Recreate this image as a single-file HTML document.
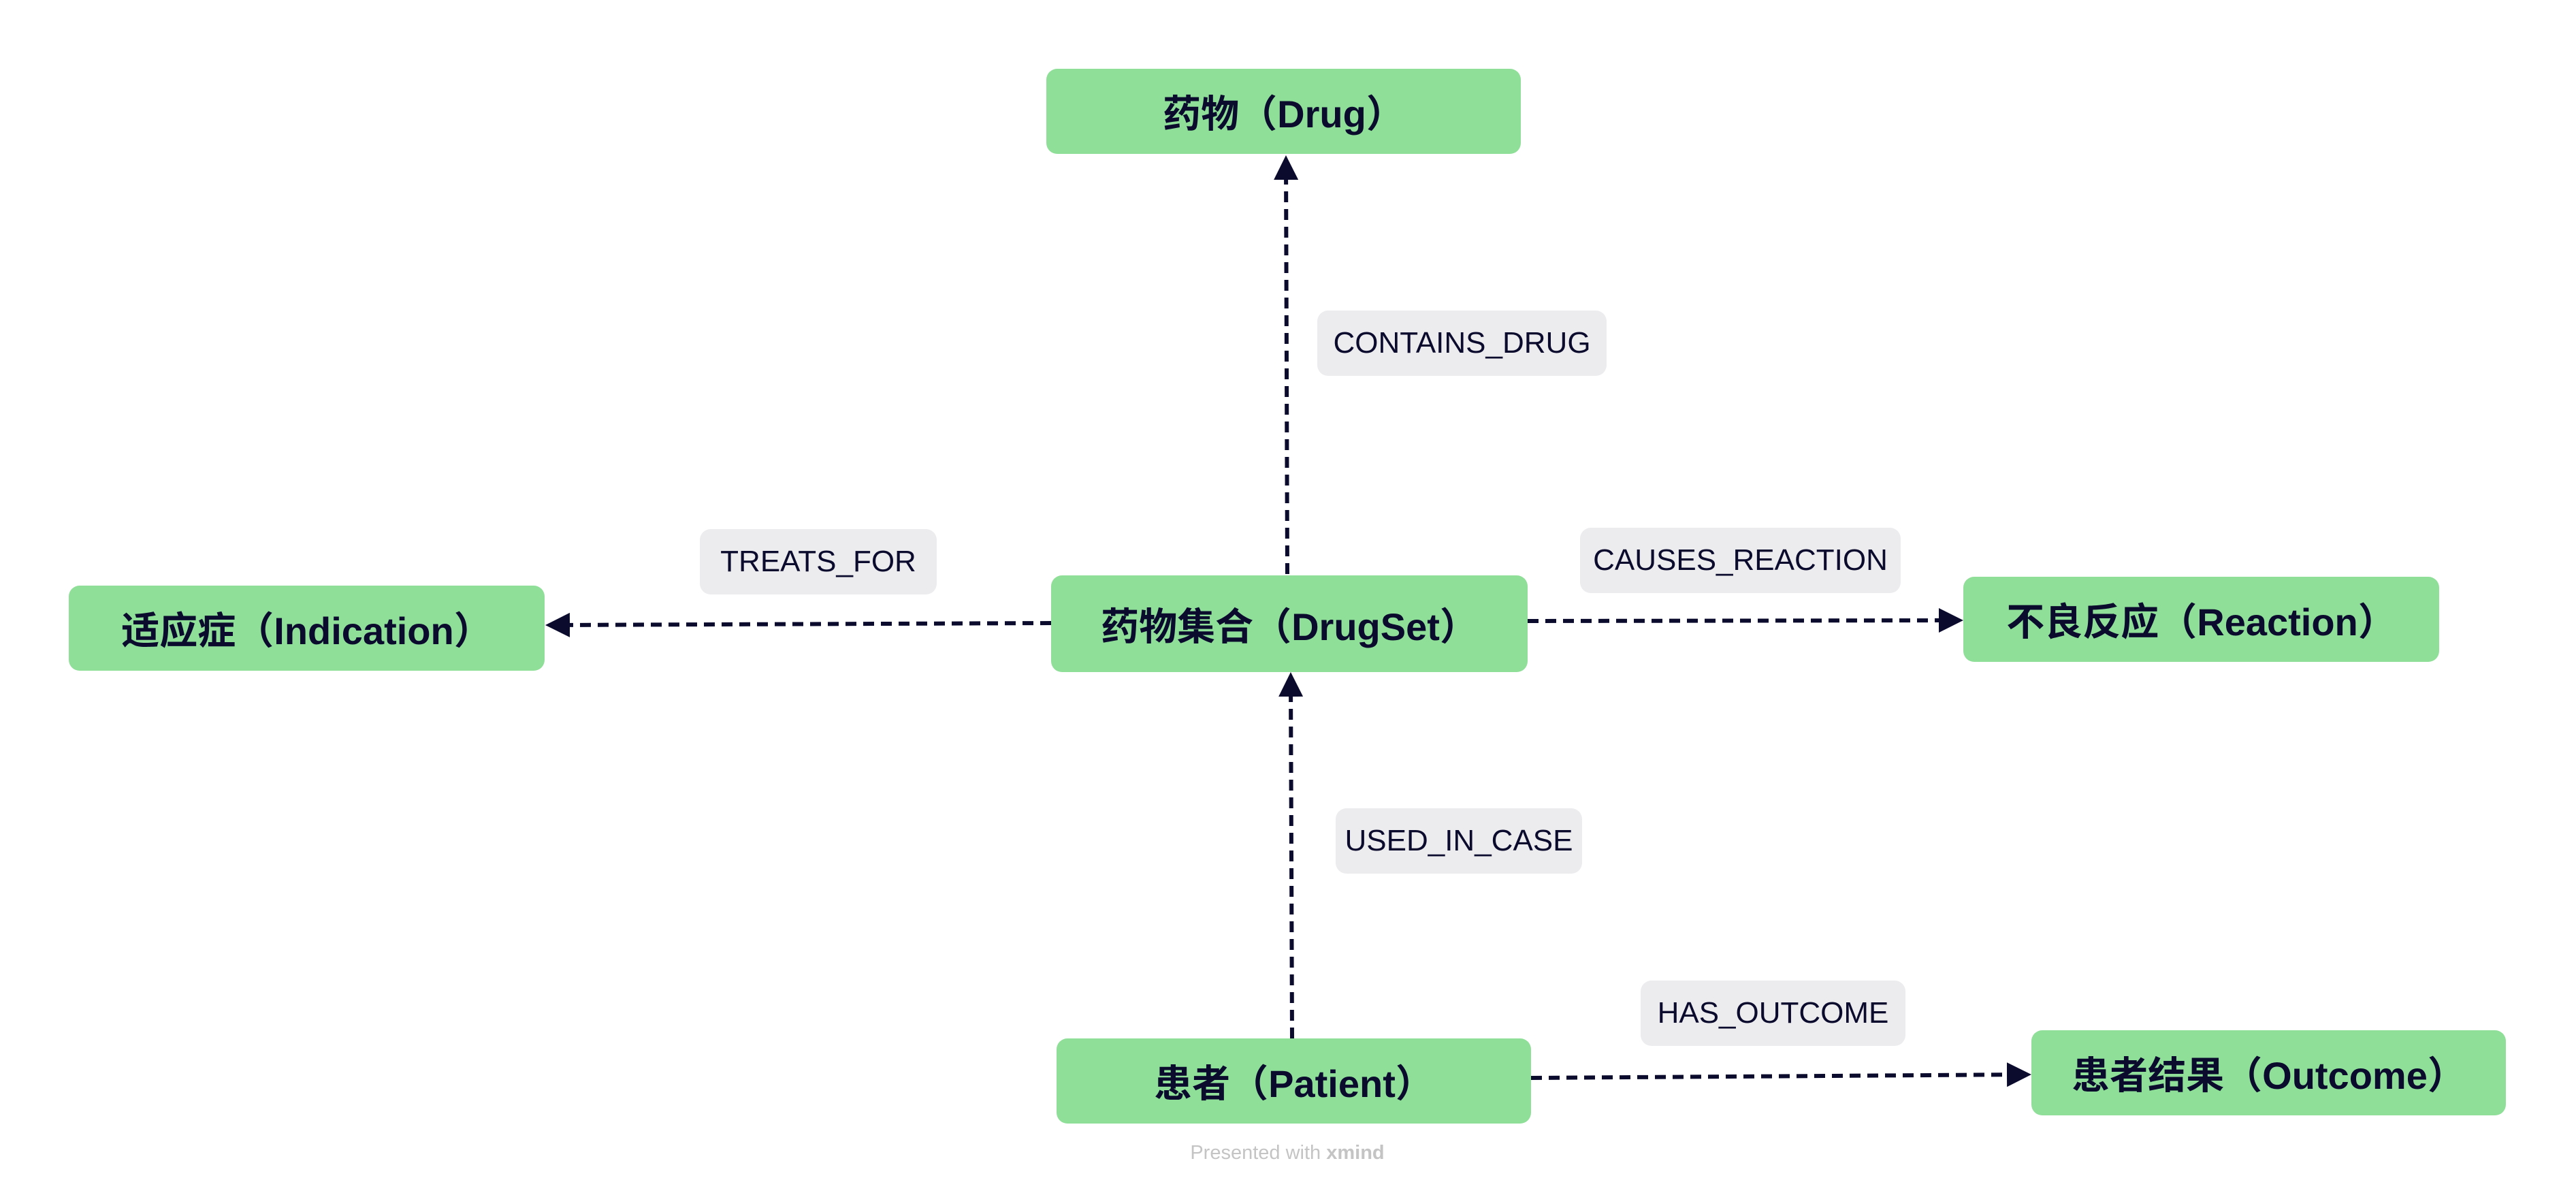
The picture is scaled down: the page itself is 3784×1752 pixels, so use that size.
<!DOCTYPE html>
<html><head><meta charset="utf-8"><style>
html,body{margin:0;padding:0;background:#fff;}
body{width:3784px;height:1752px;position:relative;overflow:hidden;font-family:"Liberation Sans","Noto Sans CJK SC",sans-serif;color:#0b0b2e;}
.n{position:absolute;background:#8fdf99;border-radius:16px;display:flex;align-items:center;justify-content:center;font-size:56px;font-weight:bold;white-space:nowrap;}
.l{position:absolute;background:#ecebee;border-radius:16px;display:flex;align-items:center;justify-content:center;font-size:44px;white-space:nowrap;}
svg{position:absolute;left:0;top:0;}
.f{position:absolute;left:1731px;top:1677px;width:320px;text-align:center;font-size:29px;color:#c4c4c4;}
</style></head><body>
<svg width="3784" height="1752">
<defs><marker id="a" markerWidth="6" markerHeight="6" refX="5" refY="3" orient="auto" markerUnits="strokeWidth"><path d="M0,0 L6,3 L0,6 z" fill="#0b0b2e"/></marker></defs>
<g stroke="#0b0b2e" stroke-width="6" stroke-dasharray="16,10" fill="none">
<line x1="1891" y1="843" x2="1889" y2="234" marker-end="url(#a)"/>
<line x1="1544" y1="915" x2="807" y2="918" marker-end="url(#a)"/>
<line x1="2244" y1="912" x2="2878" y2="911" marker-end="url(#a)"/>
<line x1="1898" y1="1525" x2="1896" y2="993" marker-end="url(#a)"/>
<line x1="2249" y1="1583" x2="2978" y2="1578" marker-end="url(#a)"/>
</g></svg>
<div class="n" style="left:1537px;top:101px;width:697px;height:125px;">药物（Drug）</div>
<div class="n" style="left:101px;top:860px;width:699px;height:125px;">适应症（Indication）</div>
<div class="n" style="left:1544px;top:845px;width:700px;height:142px;">药物集合（DrugSet）</div>
<div class="n" style="left:2884px;top:847px;width:699px;height:125px;">不良反应（Reaction）</div>
<div class="n" style="left:1552px;top:1525px;width:697px;height:125px;">患者（Patient）</div>
<div class="n" style="left:2984px;top:1513px;width:697px;height:125px;">患者结果（Outcome）</div>
<div class="l" style="left:1935px;top:456px;width:425px;height:96px;">CONTAINS_DRUG</div>
<div class="l" style="left:1028px;top:777px;width:348px;height:96px;">TREATS_FOR</div>
<div class="l" style="left:2321px;top:775px;width:471px;height:96px;">CAUSES_REACTION</div>
<div class="l" style="left:1962px;top:1187px;width:362px;height:96px;">USED_IN_CASE</div>
<div class="l" style="left:2410px;top:1440px;width:389px;height:96px;">HAS_OUTCOME</div>
<div class="f">Presented with <b>xmind</b></div>
</body></html>
